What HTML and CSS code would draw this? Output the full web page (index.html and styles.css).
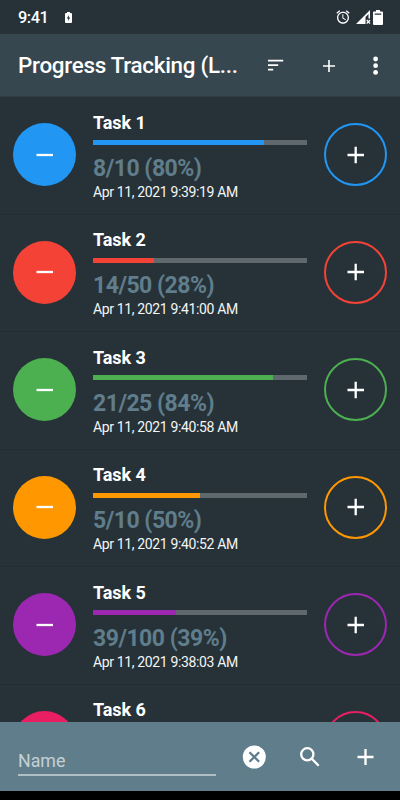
FILE: index.html
```html
<!DOCTYPE html>
<html lang="en">
<head>
<meta charset="utf-8">
<title>Progress Tracking</title>
<link rel="stylesheet" href="styles.css">
</head>
<body>
<div class="screen">
  <header class="status">
    <span class="clock">9:41</span>
    <svg class="charge" width="7" height="11" viewBox="0 0 7 11"><path fill="#fff" fill-rule="evenodd" d="M2 0h3v1h1q1 0 1 1v8q0 1-1 1H1q-1 0-1-1V2q0-1 1-1h1zM3.800 3 1.800 6.400h1.400V9l2-3.400H3.800z"/></svg>
    <svg class="alarm" width="16" height="16" viewBox="0 0 24 24"><path fill="#fff" d="M22 5.720l-4.600-3.860-1.290 1.530 4.600 3.860L22 5.720zM7.880 3.390L6.600 1.860 2 5.710l1.290 1.530 4.590-3.850zM12.500 8H11v6l4.750 2.850.75-1.230-4-2.370V8zM12 4c-4.970 0-9 4.030-9 9s4.020 9 9 9c4.970 0 9-4.030 9-9s-4.030-9-9-9zm0 16c-3.870 0-7-3.130-7-7s3.130-7 7-7 7 3.130 7 7-3.130 7-7 7z"/></svg>
    <svg class="signal" width="15" height="14" viewBox="0 0 15 14"><path fill="#fff" d="M0 14 14 0v8.500h-1.500V4L9.500 7v7z"/><path stroke="#fff" stroke-width="1.300" d="m10.700 10 3.300 3.500m0-3.500-3.300 3.500"/></svg>
    <svg class="battery" width="10" height="15" viewBox="0 0 10 15"><path fill="#fff" fill-rule="evenodd" d="M3 0h4v1.500h2q1 0 1 1V14q0 1-1 1H1q-1 0-1-1V2.500q0-1 1-1h2zM1.700 3.500v1.300h6.600V3.500z"/></svg>
  </header>
  <div class="appbar">
    <h1>Progress Tracking (L...</h1>
    <svg class="sort" width="16" height="12" viewBox="0 0 16 12"><path stroke="#fff" stroke-width="1.700" d="M0 1.700h15.200M0 6.200h10.200M0 10.700h5.200"/></svg>
    <svg class="add" width="12" height="12" viewBox="0 0 12 12"><path stroke="#fff" stroke-width="1.600" d="M0 6h12M6 0v12"/></svg>
    <svg class="more" width="6" height="19" viewBox="0 0 6 19"><g fill="#fff"><circle cx="2.600" cy="3" r="2.400"/><circle cx="2.600" cy="9.700" r="2.400"/><circle cx="2.600" cy="16.400" r="2.400"/></g></svg>
  </div>
  <main class="list">
    <section class="row blue">
      <div class="minus"><svg width="18" height="18" viewBox="0 0 18 18"><path d="M.5 9H17"/></svg></div>
      <div class="info"><h2>Task 1</h2><div class="track"><div class="fill" style="width:80%"></div></div><p class="count">8/10 (80%)</p><p class="date">Apr 11, 2021 9:39:19 AM</p></div>
      <div class="plus"><svg width="18" height="18" viewBox="0 0 18 18"><path d="M.5 9h16.500M8.700 .7v16.500"/></svg></div>
    </section>
    <section class="row red">
      <div class="minus"><svg width="18" height="18" viewBox="0 0 18 18"><path d="M.5 9H17"/></svg></div>
      <div class="info"><h2>Task 2</h2><div class="track"><div class="fill" style="width:28.300%"></div></div><p class="count">14/50 (28%)</p><p class="date">Apr 11, 2021 9:41:00 AM</p></div>
      <div class="plus"><svg width="18" height="18" viewBox="0 0 18 18"><path d="M.5 9h16.500M8.700 .7v16.500"/></svg></div>
    </section>
    <section class="row green">
      <div class="minus"><svg width="18" height="18" viewBox="0 0 18 18"><path d="M.5 9H17"/></svg></div>
      <div class="info"><h2>Task 3</h2><div class="track"><div class="fill" style="width:84%"></div></div><p class="count">21/25 (84%)</p><p class="date">Apr 11, 2021 9:40:58 AM</p></div>
      <div class="plus"><svg width="18" height="18" viewBox="0 0 18 18"><path d="M.5 9h16.500M8.700 .7v16.500"/></svg></div>
    </section>
    <section class="row orange">
      <div class="minus"><svg width="18" height="18" viewBox="0 0 18 18"><path d="M.5 9H17"/></svg></div>
      <div class="info"><h2>Task 4</h2><div class="track"><div class="fill" style="width:50%"></div></div><p class="count">5/10 (50%)</p><p class="date">Apr 11, 2021 9:40:52 AM</p></div>
      <div class="plus"><svg width="18" height="18" viewBox="0 0 18 18"><path d="M.5 9h16.500M8.700 .7v16.500"/></svg></div>
    </section>
    <section class="row purple">
      <div class="minus"><svg width="18" height="18" viewBox="0 0 18 18"><path d="M.5 9H17"/></svg></div>
      <div class="info"><h2>Task 5</h2><div class="track"><div class="fill" style="width:39%"></div></div><p class="count">39/100 (39%)</p><p class="date">Apr 11, 2021 9:38:03 AM</p></div>
      <div class="plus"><svg width="18" height="18" viewBox="0 0 18 18"><path d="M.5 9h16.500M8.700 .7v16.500"/></svg></div>
    </section>
    <section class="row pink">
      <div class="minus"></div>
      <div class="info"><h2>Task 6</h2></div>
      <div class="plus"></div>
    </section>
  </main>
  <footer class="search">
    <div class="field">Name</div>
    <svg class="clear" width="24" height="24" viewBox="0 0 24 24"><circle cx="12.300" cy="12" r="11.500" fill="#fff"/><path stroke="#607d8b" stroke-width="2.300" d="m7.500 7.200 9.600 9.600m0-9.600-9.600 9.600"/></svg>
    <svg class="find" width="20" height="20" viewBox="0 0 20 20"><g fill="none" stroke="#fff" stroke-width="2.300"><circle cx="7.300" cy="7.300" r="6.100"/><path d="m11.800 11.800 6.900 6.900"/></g></svg>
    <svg class="create" width="17" height="16" viewBox="0 0 17 16"><path stroke="#fff" stroke-width="2.300" d="M.5 8h16M8.500 0v16"/></svg>
  </footer>
</div>
</body>
</html>
```
FILE: styles.css
```css
* { box-sizing: border-box; margin: 0; padding: 0; }
body { background: #000; font-family: Roboto, sans-serif; color: #fff; }
svg { display: block; flex: none; }
.screen { width: 400px; height: 800px; display: flex; flex-direction: column; overflow: hidden; }
.status { height: 34px; flex: none; background: #263238; display: flex; align-items: center; padding-left: 18px; }
.clock { width: 47px; font-size: 16.400px; font-weight: 500; line-height: 34px; letter-spacing: -.5px; padding-top: 1px; white-space: nowrap; }
.alarm { margin-left: 263px; }
.signal { margin-left: 5px; }
.battery { margin-left: 2px; }
.appbar { height: 63px; flex: none; background: #37474f; border-bottom: 1px solid #2d3b42; display: flex; align-items: center; padding-left: 18px; }
.appbar h1 { width: 250px; font-size: 22.400px; font-weight: 500; line-height: 60px; letter-spacing: -.27px; white-space: nowrap; }
.add { margin-left: 39px; margin-top: 1px; }
.more { margin-left: 38px; }
.list { height: 625px; flex: none; overflow: hidden; background: #263238; }
.row { height: 117.500px; display: flex; padding: 0 13px; border-bottom: 1px solid #222c31; }
.minus, .plus { width: 63px; height: 63px; margin-top: 26.300px; border-radius: 50%; flex: none; display: flex; align-items: center; justify-content: center; }
.minus { background: var(--accent); }
.plus { border: 2px solid var(--accent); margin-left: 17px; }
.row path { stroke: #fff; stroke-width: 2.300; }
.info { width: 214px; margin-left: 17px; padding-top: 14.800px; white-space: nowrap; }
.info h2 { font-size: 18px; font-weight: 700; line-height: 22px; letter-spacing: -.05px; }
.track { height: 5px; margin-top: 6.400px; background: #5f686c; }
.fill { height: 5px; background: var(--accent); }
.count { margin-top: 9.800px; color: #607d8b; font-size: 23px; font-weight: 700; line-height: 28px; letter-spacing: -.5px; }
.date { font-size: 14px; line-height: 18px; letter-spacing: -.36px; color: #f4f5f5; }
.blue { --accent: #2196f3; }
.red { --accent: #f44336; }
.green { --accent: #4caf50; }
.orange { --accent: #ff9800; }
.purple { --accent: #9c27b0; }
.pink { --accent: #e91e63; }
.search { height: 69px; flex: none; background: #607d8b; display: flex; align-items: center; padding-left: 18px; }
.field { width: 198px; height: 28px; margin-top: 10px; color: #c5d0d5; border-bottom: 2px solid #b0bec5; font-size: 17.800px; line-height: 26px; }
.clear { margin-left: 26px; }
.find { margin-left: 34px; }
.create { margin-left: 37px; }
```
